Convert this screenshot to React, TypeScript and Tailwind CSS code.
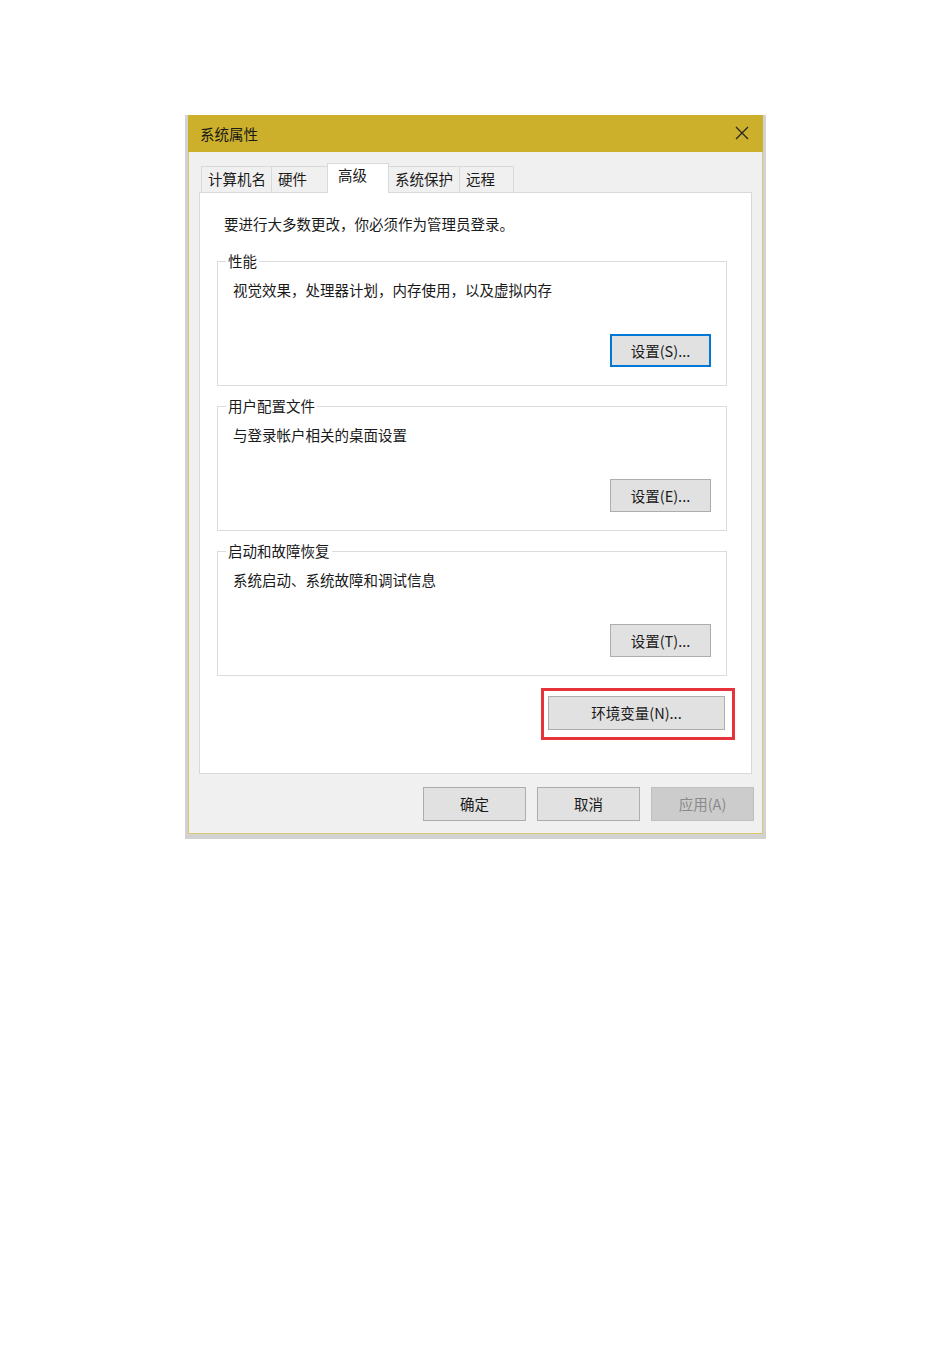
import React from "react";

const tabs = [
  { label: "计算机名", w: "w-[71px]" },
  { label: "硬件", w: "w-[57px]" },
  { label: "高级", w: "w-[62px]", active: true },
  { label: "系统保护", w: "w-[72px]" },
  { label: "远程", w: "w-[55px]" },
];

const groups = [
  { title: "性能", desc: "视觉效果，处理器计划，内存使用，以及虚拟内存", btn: "设置(S)...", focused: true },
  { title: "用户配置文件", desc: "与登录帐户相关的桌面设置", btn: "设置(E)..." },
  { title: "启动和故障恢复", desc: "系统启动、系统故障和调试信息", btn: "设置(T)..." },
];

function WinButton({ children, className = "", focused = false, disabled = false }: { children: React.ReactNode; className?: string; focused?: boolean; disabled?: boolean }) {
  const look = disabled
    ? "bg-[#cccccc] border border-[#bfbfbf] text-[#8a8a8a]"
    : focused
    ? "bg-[#e1e1e1] border-2 border-[#0078d7] text-[#1a1a1a]"
    : "bg-[#e1e1e1] border border-[#adadad] text-[#1a1a1a]";
  return (
    <button className={`flex items-center justify-center text-[14.5px] leading-[20px] ${look} ${className}`}>
      {children}
    </button>
  );
}

export default function App() {
  return (
    <div className="min-h-[1347px] bg-white pt-[115px] pl-[185px] font-['Noto_Sans_CJK_SC',sans-serif] text-[#1a1a1a]">
      {/* window shadow */}
      <div className="w-[581px] bg-[#d2d2d2] px-[3px] pb-[5px]">
        <div className="bg-[#f0f0f0] border-x border-b border-[#d9c86c]">
          {/* Title bar */}
          <div className="h-[37px] bg-[#ccb02b] flex items-center justify-between pl-[12px] pr-[14px] pt-[1px] -mx-px">
            <span className="text-[14.5px] leading-[20px] text-[#1a1a1a]">系统属性</span>
            <svg width="14" height="14" viewBox="0 0 14 14" className="mb-[2px]">
              <path d="M1 1 L13 13 M13 1 L1 13" stroke="#222" strokeWidth="1.2" fill="none" />
            </svg>
          </div>

          {/* Tabs */}
          <div className="flex items-end h-[29px] mt-[11px] pl-[13px]">
            {tabs.map((t) =>
              t.active ? (
                <div
                  key={t.label}
                  className={`${t.w} h-[30px] -mb-px -ml-px relative z-10 bg-white border-x border-t border-[#d9d9d9] pl-[10px] pt-[1px] text-[14.5px] leading-[20px]`}
                >
                  {t.label}
                </div>
              ) : (
                <div
                  key={t.label}
                  className={`${t.w} h-[26px] -ml-px bg-[#f0f0f0] border-x border-t border-[#d9d9d9] pl-[6px] pt-[2px] text-[14.5px] leading-[20px]`}
                >
                  {t.label}
                </div>
              )
            )}
          </div>

          {/* Tab panel */}
          <div className="mx-[10px] bg-white border border-[#d9d9d9] pt-[21px] pb-[43px]">
            <p className="pl-[24px] text-[14.5px] leading-[20px]">要进行大多数更改，你必须作为管理员登录。</p>

            <div className="mt-[27px] flex flex-col gap-[20px]">
              {groups.map((g) => (
                <div key={g.title} className="relative ml-[17px] w-[510px] h-[125px] border border-[#dcdcdc] pt-[18px] pl-[15px] pr-[15px]">
                  <span className="absolute -top-[11px] left-[8px] px-[2px] bg-white text-[14.5px] leading-[20px]">{g.title}</span>
                  <p className="text-[14.5px] leading-[20px]">{g.desc}</p>
                  <div className="flex justify-end mt-[34px]">
                    <WinButton focused={g.focused} className="w-[101px] h-[33px]">{g.btn}</WinButton>
                  </div>
                </div>
              ))}
            </div>

            <div className="flex justify-end pr-[26px] mt-[20px]">
              <div className="relative">
                <WinButton className="w-[177px] h-[34px]">环境变量(N)...</WinButton>
                <span className="absolute -left-[7px] -right-[10px] -top-[8px] -bottom-[10px] border-[3px] border-[#e5323b] pointer-events-none" />
              </div>
            </div>
          </div>

          {/* Dialog buttons */}
          <div className="flex justify-end gap-[11px] pr-[8px] pt-[13px] pb-[12px]">
            <WinButton className="w-[103px] h-[34px]">确定</WinButton>
            <WinButton className="w-[103px] h-[34px]">取消</WinButton>
            <WinButton disabled className="w-[103px] h-[34px]">应用(A)</WinButton>
          </div>
        </div>
      </div>
    </div>
  );
}
